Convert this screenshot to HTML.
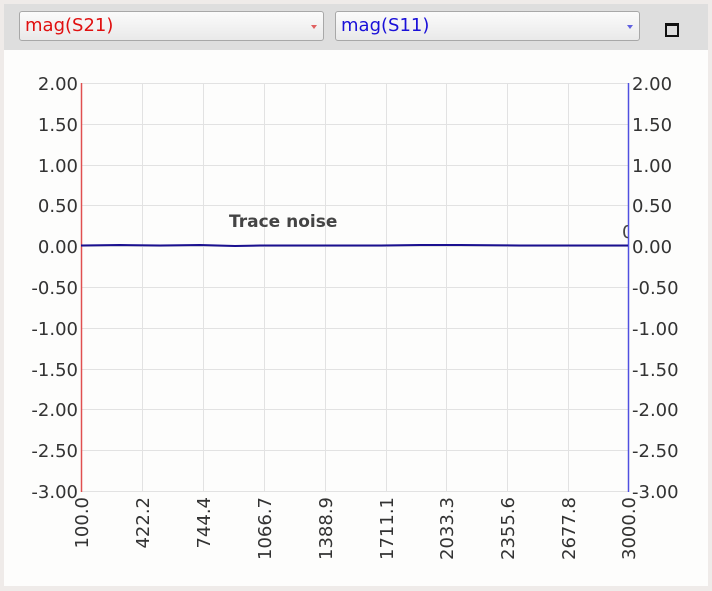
<!DOCTYPE html>
<html><head><style>
body{margin:0;width:712px;height:591px;background:#efebe9;overflow:hidden;font-family:"DejaVu Sans","Liberation Sans",sans-serif}
.panel{position:absolute;left:4px;top:4px;width:704px;height:582px;background:#fdfdfc}
.bar{position:absolute;left:0;top:0;width:704px;height:46px;background:#dedede}
.dd{position:absolute;top:7px;height:30px;border:1px solid #a8a8a8;border-radius:3px;background:linear-gradient(#fbfbfb,#e9e9e9);box-sizing:border-box;font-size:18px;line-height:28px;padding-left:5px}
.dd span.a{position:absolute;right:6px;top:13px;width:0;height:0;border-left:3px solid transparent;border-right:3px solid transparent}
</style></head><body>
<div class="panel">
<div class="bar">
<div class="dd" style="left:15px;width:305px;color:#e01010">mag(S21)<span class="a" style="border-top:4px solid #e06060"></span></div>
<div class="dd" style="left:331px;width:305px;color:#1a10d8">mag(S11)<span class="a" style="border-top:4px solid #6060e0"></span></div>
<div style="position:absolute;left:661px;top:19px;width:10px;height:9px;border:2px solid #111;border-top-width:3px"></div>
</div>
</div>
<svg style="position:absolute;left:0;top:0" width="712" height="591" font-family="DejaVu Sans, Liberation Sans, sans-serif" font-size="18" fill="#333">
<defs><clipPath id="c"><rect x="600" y="200" width="28" height="60"/></clipPath></defs>
<g stroke="#e2e2e2" stroke-width="1">
<line x1="81" y1="83.5" x2="628" y2="83.5"/><line x1="81" y1="124.5" x2="628" y2="124.5"/><line x1="81" y1="165.5" x2="628" y2="165.5"/><line x1="81" y1="205.5" x2="628" y2="205.5"/><line x1="81" y1="246.5" x2="628" y2="246.5"/><line x1="81" y1="287.5" x2="628" y2="287.5"/><line x1="81" y1="328.5" x2="628" y2="328.5"/><line x1="81" y1="369.5" x2="628" y2="369.5"/><line x1="81" y1="409.5" x2="628" y2="409.5"/><line x1="81" y1="450.5" x2="628" y2="450.5"/><line x1="81" y1="491.5" x2="628" y2="491.5"/>
<line x1="142.5" y1="83" x2="142.5" y2="491"/><line x1="203.5" y1="83" x2="203.5" y2="491"/><line x1="264.5" y1="83" x2="264.5" y2="491"/><line x1="325.5" y1="83" x2="325.5" y2="491"/><line x1="386.5" y1="83" x2="386.5" y2="491"/><line x1="446.5" y1="83" x2="446.5" y2="491"/><line x1="507.5" y1="83" x2="507.5" y2="491"/><line x1="568.5" y1="83" x2="568.5" y2="491"/>
</g>
<line x1="81.5" y1="83" x2="81.5" y2="492" stroke="#e05050" stroke-width="1.5"/>
<line x1="628.5" y1="83" x2="628.5" y2="492" stroke="#5050e0" stroke-width="1.5"/>
<polyline points="81,245.5 120,245 160,245.5 200,245 235,246 260,245.5 300,245.5 380,245.5 420,245 460,245 520,245.5 628,245.5" fill="none" stroke="#1a1090" stroke-width="2"/>
<text x="229" y="227" font-weight="bold" font-size="17" fill="#444">Trace noise</text>
<text x="622" y="238" fill="#444" clip-path="url(#c)">0</text>
<g text-anchor="end">
<text x="78" y="90">2.00</text><text x="78" y="131">1.50</text><text x="78" y="172">1.00</text><text x="78" y="212">0.50</text><text x="78" y="253">0.00</text><text x="78" y="294">-0.50</text><text x="78" y="335">-1.00</text><text x="78" y="376">-1.50</text><text x="78" y="416">-2.00</text><text x="78" y="457">-2.50</text><text x="78" y="498">-3.00</text>
</g>
<g>
<text x="632" y="90">2.00</text><text x="632" y="131">1.50</text><text x="632" y="172">1.00</text><text x="632" y="212">0.50</text><text x="632" y="253">0.00</text><text x="632" y="294">-0.50</text><text x="632" y="335">-1.00</text><text x="632" y="376">-1.50</text><text x="632" y="416">-2.00</text><text x="632" y="457">-2.50</text><text x="632" y="498">-3.00</text>
</g>
<g text-anchor="end">
<text transform="translate(88,497) rotate(-90)">100.0</text>
<text transform="translate(149,497) rotate(-90)">422.2</text>
<text transform="translate(210,497) rotate(-90)">744.4</text>
<text transform="translate(271,497) rotate(-90)">1066.7</text>
<text transform="translate(332,497) rotate(-90)">1388.9</text>
<text transform="translate(393,497) rotate(-90)">1711.1</text>
<text transform="translate(453,497) rotate(-90)">2033.3</text>
<text transform="translate(514,497) rotate(-90)">2355.6</text>
<text transform="translate(575,497) rotate(-90)">2677.8</text>
<text transform="translate(635,497) rotate(-90)">3000.0</text>
</g>
</svg>
</body></html>
